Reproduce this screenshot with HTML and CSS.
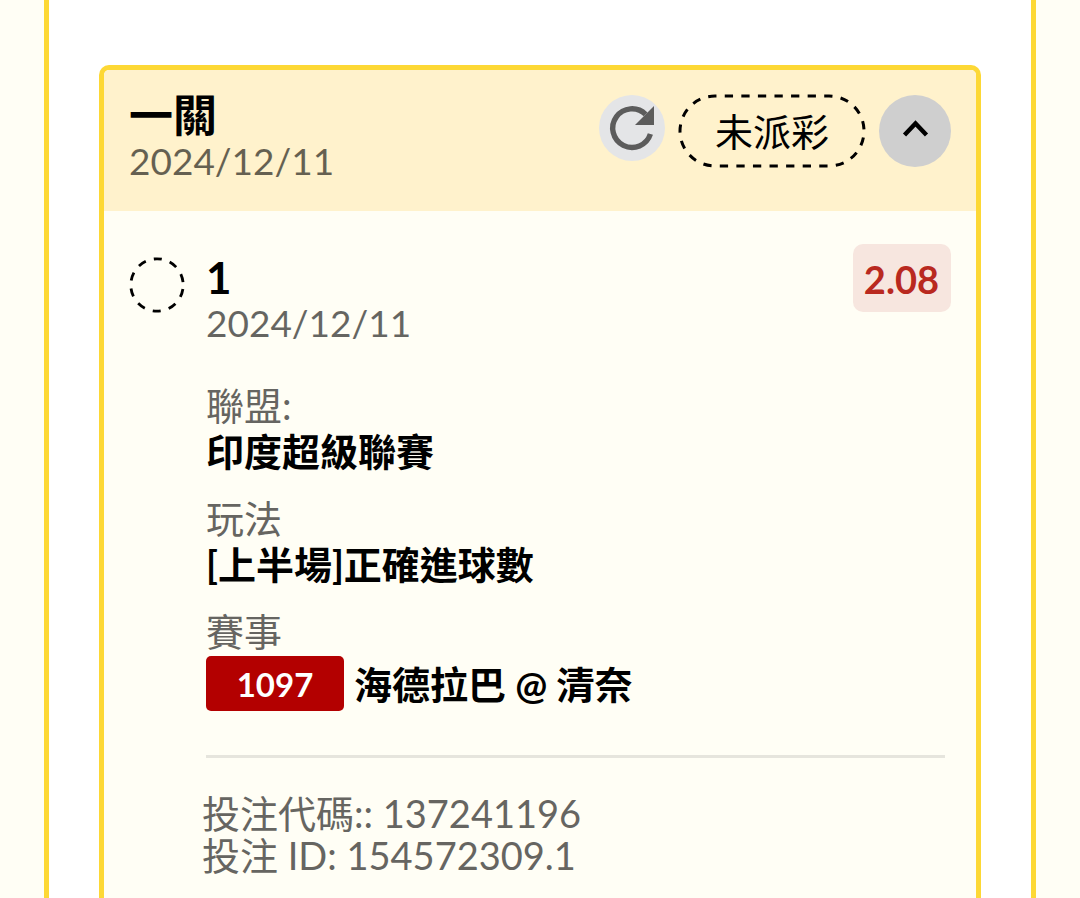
FILE: index.html
```html
<!DOCTYPE html>
<html lang="zh-Hant">
<head>
<meta charset="utf-8">
<meta name="viewport" content="width=device-width, initial-scale=1">
<title>一關</title>
<link rel="stylesheet" href="styles.css">
</head>
<body>
<main class="panel">
  <article class="card">
    <header class="card-head">
      <div class="heading">
        <h1 class="title">一關</h1>
        <time class="date" datetime="2024-12-11">2024/12/11</time>
      </div>
      <div class="actions">
        <button class="refresh" type="button" aria-label="重新整理">
          <svg viewBox="0 0 66 66" aria-hidden="true">
            <path d="M51.4 39 A19.3 19.3 0 1 1 46.6 19.4" fill="none" stroke="#5c5c5c" stroke-width="5.4"/>
            <path d="M55 11 V30 H36 Z" fill="#5c5c5c"/>
          </svg>
        </button>
        <span class="status">
          <svg class="outline" aria-hidden="true"><rect class="pill-line" x="1" y="1" rx="35" pathLength="459"/></svg>
          未派彩
        </span>
        <button class="toggle" type="button" aria-label="收合">
          <svg viewBox="0 0 72 72" aria-hidden="true"><path d="M25.5 40 L36.5 28.5 L47.5 40" fill="none" stroke="#000" stroke-width="4.4"/></svg>
        </button>
      </div>
    </header>
    <section class="bet">
      <svg class="marker" viewBox="0 0 56 56" aria-hidden="true"><circle cx="28" cy="28" r="26.2" fill="none" stroke="#000" stroke-width="2.8" stroke-dasharray="8.2 8.26" stroke-dashoffset="12.3"/></svg>
      <div class="details">
        <div class="bet-head">
          <div class="heading">
            <h2 class="title">1</h2>
            <time class="date" datetime="2024-12-11">2024/12/11</time>
          </div>
          <span class="odds">2.08</span>
        </div>
        <dl class="facts">
          <div><dt>聯盟:</dt><dd>印度超級聯賽</dd></div>
          <div><dt>玩法</dt><dd>[上半場]正確進球數</dd></div>
          <div><dt>賽事</dt><dd class="match"><span class="code">1097</span><span>海德拉巴 @ 清奈</span></dd></div>
        </dl>
        <hr class="rule">
        <p class="ids">投注代碼:: 137241196<br>投注 ID: 154572309.1</p>
      </div>
    </section>
  </article>
</main>
</body>
</html>
```

FILE: styles.css
```css
* { box-sizing: border-box; }

body {
  margin: 0;
  background: #fffef5;
  color: #000;
  font-family: Lato, "Noto Sans CJK TC", sans-serif;
  font-size: 38px;
  line-height: 46px;
}

h1, h2, p, dl, dd { margin: 0; }

button {
  padding: 0;
  border: 0;
  border-radius: 50%;
  flex: none;
}

svg { display: block; }

.panel {
  min-height: 100vh;
  margin: 0 44px;
  padding: 65px 50px 0;
  border: solid #fdd835;
  border-width: 0 5px;
  background: #fff;
}

.card {
  min-height: calc(100vh - 65px);
  border: 5px solid #fdd835;
  border-bottom: 0;
  border-radius: 10px 10px 0 0;
  background: #fffef5;
}

.card-head {
  display: flex;
  justify-content: space-between;
  padding: 22px 25px 27px;
  border-radius: 5px 5px 0 0;
  background: #fff2cc;
}

.title {
  font-size: 44px;
  line-height: 46px;
  font-weight: 700;
}

.date {
  display: block;
  color: #000;
  font-size: 37px;
  opacity: 0.6;
}

.actions {
  display: flex;
  align-items: flex-start;
  gap: 14px;
  margin-top: 3px;
}

.refresh {
  width: 66px;
  height: 66px;
  background: #e4e5e7;
}

.status {
  position: relative;
  padding: 13px 36px;
}

.outline {
  position: absolute;
  inset: 0;
  width: 100%;
  height: 100%;
  overflow: visible;
}

.pill-line {
  width: calc(100% - 2px);
  height: calc(100% - 2px);
  fill: none;
  stroke: #000;
  stroke-width: 3px;
  stroke-dasharray: 8.5;
  stroke-dashoffset: 7px;
}

.toggle {
  width: 72px;
  height: 72px;
  background: #cfcfcf;
}

.bet {
  display: flex;
  gap: 21px;
  padding: 33px 25px 0;
}

.marker {
  flex: none;
  width: 56px;
  height: 56px;
  margin-top: 13px;
}

.details { flex: 1; }

.bet-head {
  display: flex;
  justify-content: space-between;
  align-items: flex-start;
}

.bet-head .heading { padding-top: 10px; }

.odds {
  padding: 12px 12px 10px 11px;
  border-radius: 10px;
  background: #f7e6df;
  color: #b9291f;
  font-weight: 700;
}

.facts {
  display: grid;
  gap: 21px;
  margin-top: 36px;
}

dt { color: #666561; }

dd { font-weight: 700; }

.match {
  display: flex;
  align-items: center;
  gap: 10px;
  margin-top: 2px;
}

.code {
  width: 138px;
  padding: 5px 0 4px;
  border-radius: 5px;
  background: #b30000;
  color: #fff;
  font-size: 33px;
  text-align: center;
}

.rule {
  height: 3px;
  margin: 44px 6px 0 0;
  border: 0;
  background: #e6e5dd;
}

.ids {
  margin: 34px 0 0 -4px;
  color: #666561;
  line-height: 42px;
}
```
